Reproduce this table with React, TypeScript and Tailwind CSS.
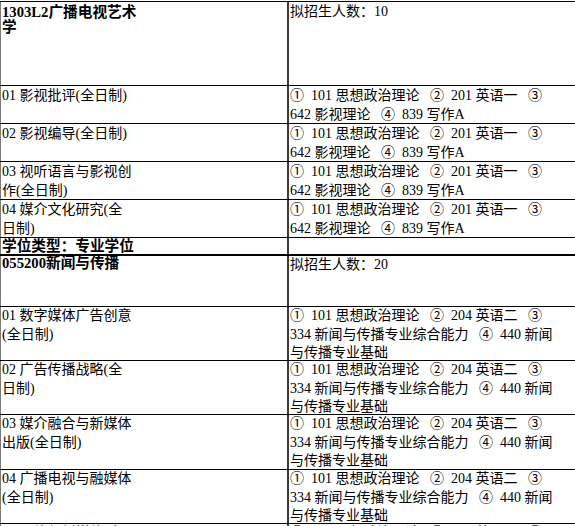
const S = '\u2002';

type Row = {
  left: string[];
  right: string[];
  rowClass: string;
  leftClass?: string;
  rightClass?: string;
};

const exam1 = [`①${S}101 思想政治理论${S} ②${S}201 英语一${S} ③`, `642 影视理论${S} ④${S}839 写作A`];
const exam2 = [
  `①${S}101 思想政治理论${S} ②${S}204 英语二${S} ③`,
  `334 新闻与传播专业综合能力${S} ④${S}440 新闻`,
  '与传播专业基础',
];

const bold = 'font-bold text-[14.67px] leading-[15px] pt-[3px]';

const rows: Row[] = [
  { left: ['1303L2广播电视艺术', '学'], right: ['拟招生人数：10'], rowClass: 'h-[84px] border-t', leftClass: bold },
  { left: ['01 影视批评(全日制)'], right: exam1, rowClass: 'h-[38px] border-t' },
  { left: ['02 影视编导(全日制)'], right: exam1, rowClass: 'h-[38px] border-t' },
  { left: ['03 视听语言与影视创', '作(全日制)'], right: exam1, rowClass: 'h-[38px] border-t' },
  { left: ['04 媒介文化研究(全', '日制)'], right: exam1, rowClass: 'h-[38px] border-t' },
  { left: ['学位类型：专业学位'], right: [], rowClass: 'h-[17px] border-t', leftClass: 'font-bold text-[14.67px] leading-[16px]' },
  { left: ['055200新闻与传播'], right: ['拟招生人数：20'], rowClass: 'h-[52px] border-t-2', leftClass: 'font-bold text-[14.67px] leading-[15px]', rightClass: 'leading-[17px]' },
  { left: ['01 数字媒体广告创意', '(全日制)'], right: exam2, rowClass: 'h-[54px] border-t' },
  { left: ['02 广告传播战略(全', '日制)'], right: exam2, rowClass: 'h-[54px] border-t' },
  { left: ['03 媒介融合与新媒体', '出版(全日制)'], right: exam2, rowClass: 'h-[55px] border-t' },
  { left: ['04 广播电视与融媒体', '(全日制)'], right: exam2, rowClass: 'h-[54px] border-t' },
  { left: ['05 网络与新媒体(全日', '制)'], right: exam2, rowClass: 'h-[54px] border-t' },
];

function Lines({ lines }: { lines: string[] }) {
  return (
    <>
      {lines.map((l, i) => (
        <div key={i} className="whitespace-pre">{l}</div>
      ))}
    </>
  );
}

export default function App() {
  return (
    <div className="w-[575px] h-[526px] overflow-hidden bg-white text-black font-[family-name:'Liberation_Serif','Noto_Sans_CJK_SC',serif] text-[14px] leading-[19px]">
      <div className="mt-[1px] w-[620px] flex flex-col">
        {rows.map((r, i) => (
          <div key={i} className={`flex shrink-0 border-black ${r.rowClass}`}>
            <div className={`w-[289px] shrink-0 border-l border-l-[#7a7a7a] border-r-2 border-r-[#3a3a3a] pl-[1px] ${i >= 7 ? 'leading-[18.5px]' : ''} ${r.leftClass ?? ''}`}>
              <Lines lines={r.left} />
            </div>
            <div className={`flex-1 pl-[1px] ${i >= 7 ? 'leading-[18.5px]' : ''} ${r.rightClass ?? ''}`}>
              <Lines lines={r.right} />
            </div>
          </div>
        ))}
      </div>
    </div>
  );
}
